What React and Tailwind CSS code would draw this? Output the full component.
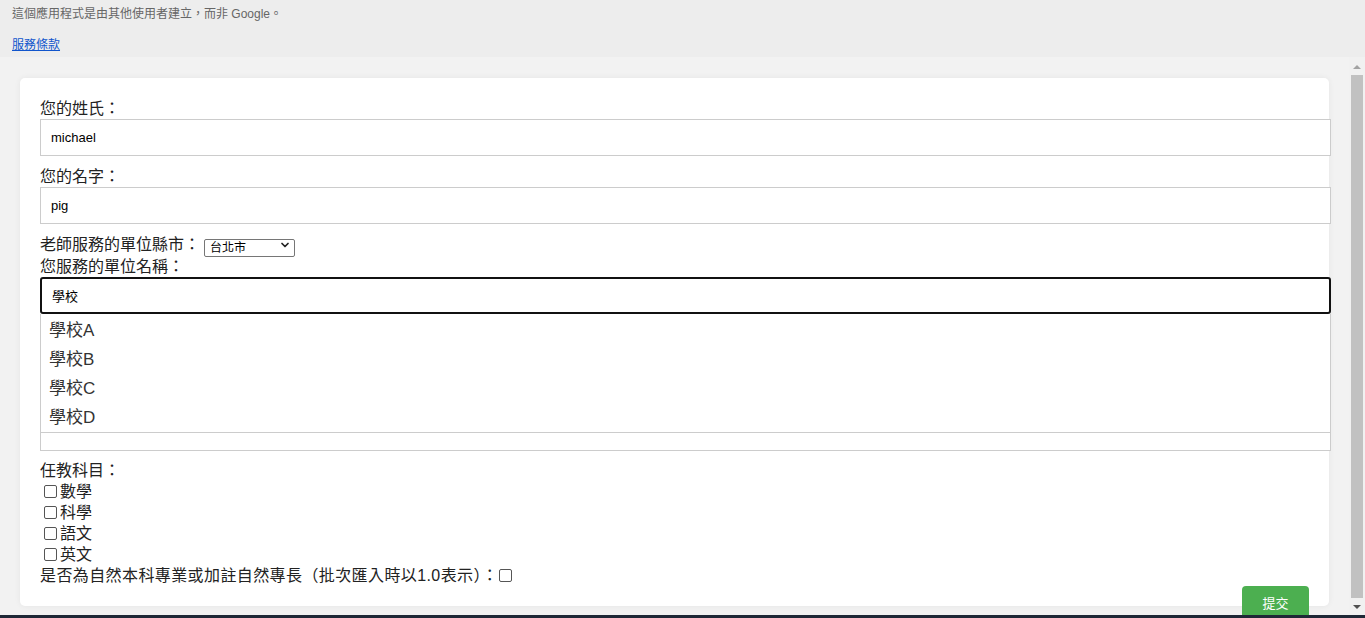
import React from 'react';
import { ChevronDown } from 'lucide-react';

const font = { fontFamily: '"Liberation Sans", "Noto Sans CJK TC", sans-serif' };

const schools = ['學校A', '學校B', '學校C', '學校D'];
const subjects = ['數學', '科學', '語文', '英文'];

const Label = ({ children }) => (
  <div className="h-[21px] text-[16px] leading-[21px] text-[#222]">{children}</div>
);

const TextBox = ({ value, focused }) => (
  <input
    readOnly
    value={value}
    className={
      'block w-[1291px] h-[37px] px-[10px] text-[13px] text-black bg-white outline-none ' +
      (focused ? 'border-2 border-[#111] rounded-[3px] px-[9px]' : 'border border-[#cccccc]')
    }
  />
);

const App = () => {
  return (
    <div className="h-[618px] w-[1365px] overflow-hidden flex flex-col bg-[#ededed]" style={font}>
      {/* Header notice */}
      <div className="h-[57px] px-[12px] pt-[6px]">
        <p className="text-[12px] leading-[16px] text-[#666]">這個應用程式是由其他使用者建立，而非 Google。</p>
        <a href="#" className="block mt-[15px] text-[12px] leading-[16px] text-[#1155cc] underline">服務條款</a>
      </div>

      {/* Iframe area */}
      <div className="flex-1 flex bg-[#f2f2f2] min-h-0">
        <div className="w-[1349px] shrink-0 pt-[21px] pl-[20px]">
          <div className="w-[1309px] bg-white rounded-[5px] shadow-[0_0_6px_rgba(0,0,0,0.06)] px-[20px] pt-[20px] pb-[20px]">
            <Label>您的姓氏：</Label>
            <TextBox value="michael" />

            <div className="mt-[10px]">
              <Label>您的名字：</Label>
            </div>
            <TextBox value="pig" />

            <div className="mt-[10px] flex items-center h-[21px] text-[16px] leading-[21px] text-[#222]">
              <span>老師服務的單位縣市：</span>
              <div className="relative w-[91px] h-[18px] ml-[4px]">
                <select className="appearance-none w-full h-full border border-[#767676] rounded-[2px] bg-white text-[12px] leading-[16px] pl-[5px] text-black">
                  <option>台北市</option>
                </select>
                <ChevronDown className="absolute right-[4px] top-[3px] pointer-events-none" size={12} strokeWidth={3.5} />
              </div>
            </div>
            <div className="mt-[1px]">
              <Label>您服務的單位名稱：</Label>
            </div>
            <TextBox value="學校" focused />

            {/* Suggestions */}
            <div className="w-[1291px] border-x border-[#cccccc] bg-white pt-[2px]">
              {schools.map((s) => (
                <div key={s} className="h-[29px] leading-[29px] pl-[8px] text-[17px] text-[#333]">{s}</div>
              ))}
            </div>
            <div className="w-[1291px] h-[19px] border border-[#cccccc] bg-white"></div>

            <div className="mt-[9px]">
              <Label>任教科目：</Label>
            </div>
            {subjects.map((s) => (
              <label key={s} className="flex items-center h-[21px] text-[16px] leading-[21px] text-[#222]">
                <input type="checkbox" className="w-[13px] h-[13px] ml-[4px] mr-[3px] appearance-none border border-[#555] rounded-[2px] bg-white" />
                <span>{s}</span>
              </label>
            ))}
            <label className="flex items-center h-[21px] text-[16px] leading-[21px] text-[#222]">
              <span className="tracking-[0.4px]">是否為自然本科專業或加註自然專長（批次匯入時以1.0表示）：</span>
              <input type="checkbox" className="w-[13px] h-[13px] ml-[1px] appearance-none border border-[#555] rounded-[2px] bg-white" />
            </label>
          </div>

          <div className="w-[1309px] flex justify-end pr-[20px] -mt-[20px]">
            <button className="w-[67px] h-[34px] bg-[#4caf50] rounded-t-[4px] text-white text-[13px] pt-[2px]">提交</button>
          </div>
        </div>

        {/* Scrollbar */}
        <div className="w-[16px] shrink-0 flex flex-col items-center bg-[#f1f1f1]">
          <div className="h-[17px] flex items-center justify-center pt-[3px]">
            <div className="w-0 h-0 border-x-[4px] border-x-transparent border-b-[4px] border-b-[#a3a3a3]"></div>
          </div>
          <div className="w-[12px] flex-1 bg-[#c1c1c1] mt-[1px] mb-[17px]"></div>
          <div className="h-[17px] -mt-[17px] flex items-center justify-center">
            <div className="w-0 h-0 border-x-[4px] border-x-transparent border-t-[4px] border-t-[#505050]"></div>
          </div>
        </div>
      </div>

      {/* Taskbar edge */}
      <div className="h-[3px] bg-[#1f2836]"></div>
    </div>
  );
};

export default App;
